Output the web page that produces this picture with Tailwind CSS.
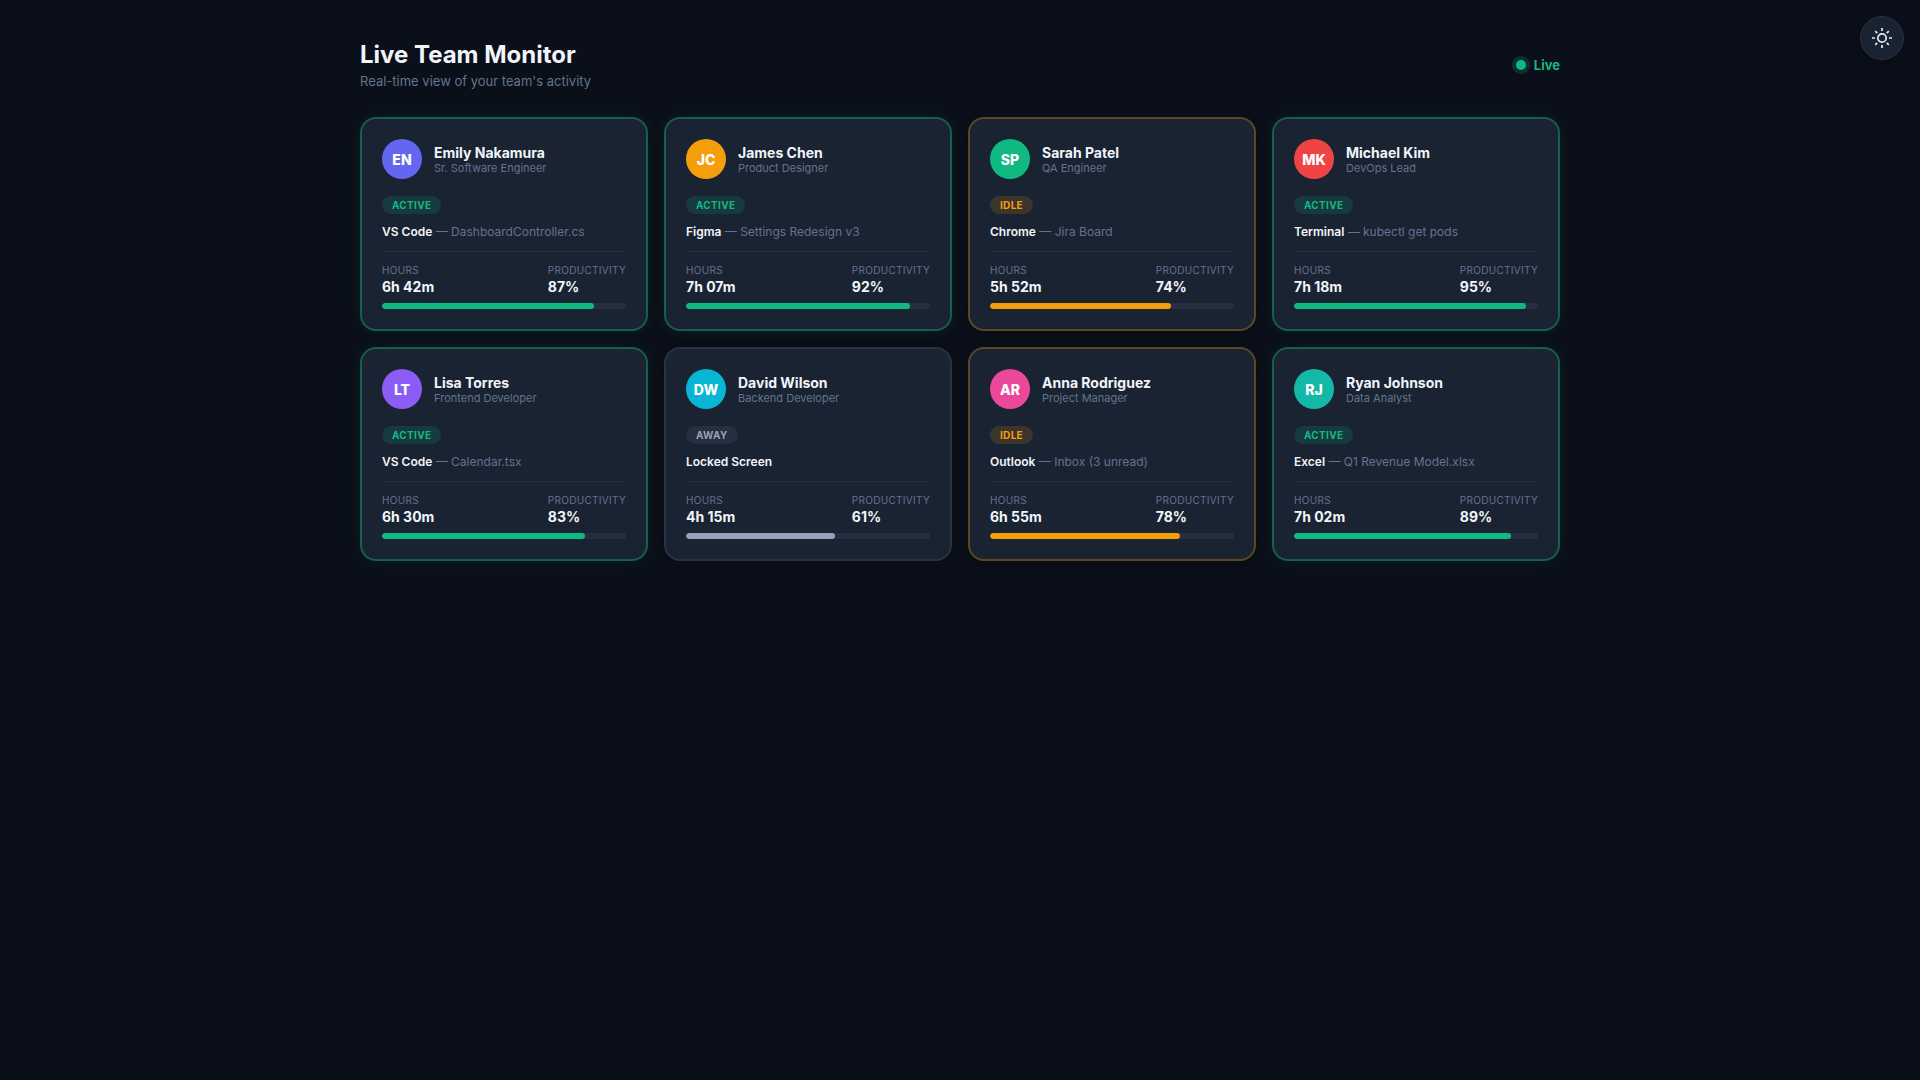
<!DOCTYPE html>
<html lang="en">
<head>
<meta charset="utf-8">
<title>Live Team Monitor</title>
<script src="https://cdn.jsdelivr.net/npm/@tailwindcss/browser@4"></script>
</head>
<body class="min-h-screen bg-[#0b0f19] font-['Inter',sans-serif] text-slate-100">
<button class="fixed top-4 right-4 flex size-11 items-center justify-center rounded-full border border-[#283242] bg-[#1a2332] text-slate-200 shadow-[0_4px_20px_rgba(0,0,0,0.2)]" aria-label="Toggle theme">
  <svg class="size-5" viewBox="0 0 20 20" fill="none" stroke="currentColor" stroke-width="1.7"><circle cx="10" cy="10" r="4.2"/><path d="M10 0v3M10 17v3M0 10h3M17 10h3M3.2 3.2l2 2M14.8 14.8l2 2M3.2 16.8l2-2M14.8 5.2l2-2"/></svg>
</button>
<main class="mx-auto w-[1200px] pt-10">
  <header class="mb-7 flex h-[49px] items-center justify-between">
    <div>
      <h1 class="text-2xl leading-[29px] font-bold">Live Team Monitor</h1>
      <p class="mt-1 text-[13px] leading-4 text-slate-500">Real-time view of your team's activity</p>
    </div>
    <div class="flex items-center gap-2 text-[13px] leading-4 font-bold text-[#10b981]">
      <span class="size-2.5 rounded-full bg-[#10b981] shadow-[0_0_0_4px_rgba(16,185,129,0.2)]"></span><span class="pt-px">Live</span>
    </div>
  </header>
  <section id="team" class="grid grid-cols-4 gap-4"></section>
</main>
<script>
const styles = {
  Active: { card: 'border-[#10b981]/40 shadow-[0_0_20px_rgba(16,185,129,0.08)]', badge: 'bg-[#10b981]/15 text-[#10b981]', bar: 'bg-[#10b981]' },
  Idle: { card: 'border-[#f59e0b]/30 shadow-[0_2px_12px_rgba(0,0,0,0.2)]', badge: 'bg-[#f59e0b]/15 text-[#f59e0b]', bar: 'bg-[#f59e0b]' },
  Away: { card: 'border-[#283242] shadow-[0_2px_12px_rgba(0,0,0,0.2)]', badge: 'bg-[#262e3f] text-[#94a3b8]', bar: 'bg-[#94a3b8]' }
};
const team = [
  ['Emily Nakamura', 'Sr. Software Engineer', 'EN', 'bg-[#6366f1]', 'Active', 'VS Code', 'DashboardController.cs', '6h 42m', 87],
  ['James Chen', 'Product Designer', 'JC', 'bg-[#f59e0b]', 'Active', 'Figma', 'Settings Redesign v3', '7h 07m', 92],
  ['Sarah Patel', 'QA Engineer', 'SP', 'bg-[#10b981]', 'Idle', 'Chrome', 'Jira Board', '5h 52m', 74],
  ['Michael Kim', 'DevOps Lead', 'MK', 'bg-[#ef4444]', 'Active', 'Terminal', 'kubectl get pods', '7h 18m', 95],
  ['Lisa Torres', 'Frontend Developer', 'LT', 'bg-[#8b5cf6]', 'Active', 'VS Code', 'Calendar.tsx', '6h 30m', 83],
  ['David Wilson', 'Backend Developer', 'DW', 'bg-[#06b6d4]', 'Away', 'Locked Screen', '', '4h 15m', 61],
  ['Anna Rodriguez', 'Project Manager', 'AR', 'bg-[#ec4899]', 'Idle', 'Outlook', 'Inbox (3 unread)', '6h 55m', 78],
  ['Ryan Johnson', 'Data Analyst', 'RJ', 'bg-[#14b8a6]', 'Active', 'Excel', 'Q1 Revenue Model.xlsx', '7h 02m', 89]
];
document.getElementById('team').innerHTML = team.map(([name, role, initials, color, status, app, doc, hours, score]) => `
  <article class="h-[214px] rounded-2xl border-2 bg-[#1a2332] p-5 ${styles[status].card}">
    <div class="flex items-center gap-3">
      <div class="flex size-10 items-center justify-center rounded-full pt-0.5 text-sm leading-4 font-extrabold text-white ${color}">${initials}</div>
      <div>
        <h2 class="text-sm leading-[17px] font-bold">${name}</h2>
        <p class="text-[11px] leading-[14px] text-slate-500">${role}</p>
      </div>
    </div>
    <div class="mt-[17px] flex"><span class="h-[18px] rounded-full px-2.5 text-[10px] leading-[18px] font-bold tracking-[0.3px] uppercase ${styles[status].badge}">${status}</span></div>
    <p class="mt-2.5 text-xs leading-[15px] text-slate-500"><strong class="font-semibold text-slate-100">${app}</strong>${doc ? ' — ' + doc : ''}</p>
    <div class="mt-3 flex justify-between border-t border-[#262e3f] pt-3">
      <div><div class="text-[10px] leading-3 tracking-[0.3px] text-slate-500 uppercase">Hours</div><div class="mt-0.5 text-sm leading-[17px] font-bold">${hours}</div></div>
      <div><div class="text-[10px] leading-3 tracking-[0.3px] text-slate-500 uppercase">Productivity</div><div class="mt-0.5 text-sm leading-[17px] font-bold">${score}%</div></div>
    </div>
    <div class="mt-2 h-1.5 overflow-hidden rounded-[3px] bg-[#262e3f]"><div class="h-full rounded-[3px] ${styles[status].bar}" style="width:${score}%"></div></div>
  </article>`).join('');
</script>
</body>
</html>
